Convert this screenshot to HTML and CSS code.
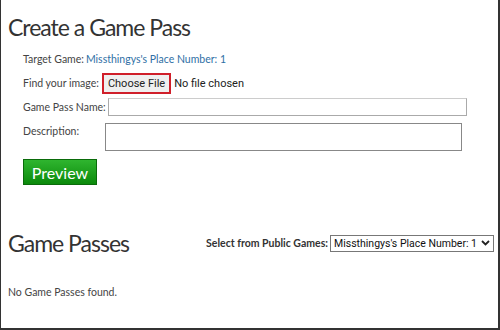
FILE: index.html
```html
<!DOCTYPE html>
<html lang="en">
  <head>
    <meta charset="UTF-8" />
    <title>Create a Game Pass</title>
    <link rel="stylesheet" href="styles.css">
  </head>
  <body>
    <div class="frame">
      <h2 class="title">Create a Game Pass</h2>
      <div class="form">
        <div class="row">
          <label>Target Game:</label>
          <a class="link" href="#">Missthingys's Place Number: 1</a>
        </div>
        <div class="row">
          <label>Find your image:</label>
          <span class="file-btn">Choose File</span>
          <span class="file-text">No file chosen</span>
        </div>
        <div class="row">
          <label>Game Pass Name:</label>
          <input class="name-input" type="text" />
        </div>
        <div class="row row-top">
          <label class="desc-label">Description:</label>
          <textarea class="desc-input"></textarea>
        </div>
        <button class="preview">Preview</button>
      </div>

      <div class="passes-head">
        <h2 class="title">Game Passes</h2>
        <div class="select-box">
          <label>Select from Public Games:</label>
          <span class="select">Missthingys's Place Number: 1
            <svg width="9" height="6" viewBox="0 0 9 6"><path d="M1 1 L4.5 4.5 L8 1" fill="none" stroke="#222" stroke-width="1.8"/></svg>
          </span>
        </div>
      </div>
      <p class="empty">No Game Passes found.</p>
    </div>
  </body>
</html>
```

FILE: styles.css
```css
* {
  margin: 0;
  padding: 0;
  box-sizing: border-box;
  font-family: "Lato", sans-serif;
}

body {
  background: #ffffff;
}

.frame {
  width: 500px;
  height: 330px;
  border-left: 1px solid #333;
  border-right: 2px solid #333;
  border-bottom: 2px solid #333;
  padding: 12px 0 0 7px;
  color: #444;
}

.title {
  font-weight: 400;
  font-size: 23px;
  letter-spacing: -1px;
  color: #333;
  line-height: 30px;
}

.form {
  padding-left: 15px;
  margin-top: 5px;
}

.row {
  display: flex;
  align-items: center;
  font-size: 10.5px;
  height: 24px;
}

.row label {
  margin-right: 2px;
}

.link {
  color: #2f6fa5;
  text-decoration: none;
}

.file-btn {
  display: inline-block;
  border: 2px solid #d01f2a;
  background: #efefef;
  color: #222;
  font-family: "Roboto", sans-serif;
  font-size: 11px;
  padding: 2px 4px 2px 4px;
  margin-left: 1px;
  margin-right: 3px;
}

.file-text {
  font-family: "Roboto", sans-serif;
  font-size: 11px;
  color: #222;
}

.name-input {
  width: 359px;
  height: 18px;
  border: 1px solid #aaa;
  border-top-color: #ccc;
}

.row-top {
  align-items: flex-start;
  height: 36px;
  margin-top: 4px;
}

.desc-label {
  width: 80px;
  padding-top: 2px;
}

.desc-input {
  width: 357px;
  height: 28px;
  border: 1px solid #888;
  resize: none;
}

.preview {
  margin-top: 0;
  width: 74px;
  height: 26px;
  border: 1px solid #0a6b0a;
  background: linear-gradient(#2fb52f, #0b8a0b);
  color: #fff;
  font-size: 16px;
  font-family: "Lato", sans-serif;
}

.passes-head {
  display: flex;
  align-items: center;
  justify-content: space-between;
  margin-top: 43px;
  padding-right: 4px;
}

.select-box {
  display: flex;
  align-items: center;
  font-size: 10.5px;
  font-weight: 700;
  color: #333;
}

.select {
  display: flex;
  align-items: center;
  gap: 4px;
  margin-left: 2px;
  border: 1px solid #777;
  padding: 1px 3px 1px 3px;
  font-family: "Roboto", sans-serif;
  font-size: 10.5px;
  font-weight: 400;
  color: #111;
}

.empty {
  margin-top: 28px;
  font-size: 10.5px;
  color: #444;
}
```
